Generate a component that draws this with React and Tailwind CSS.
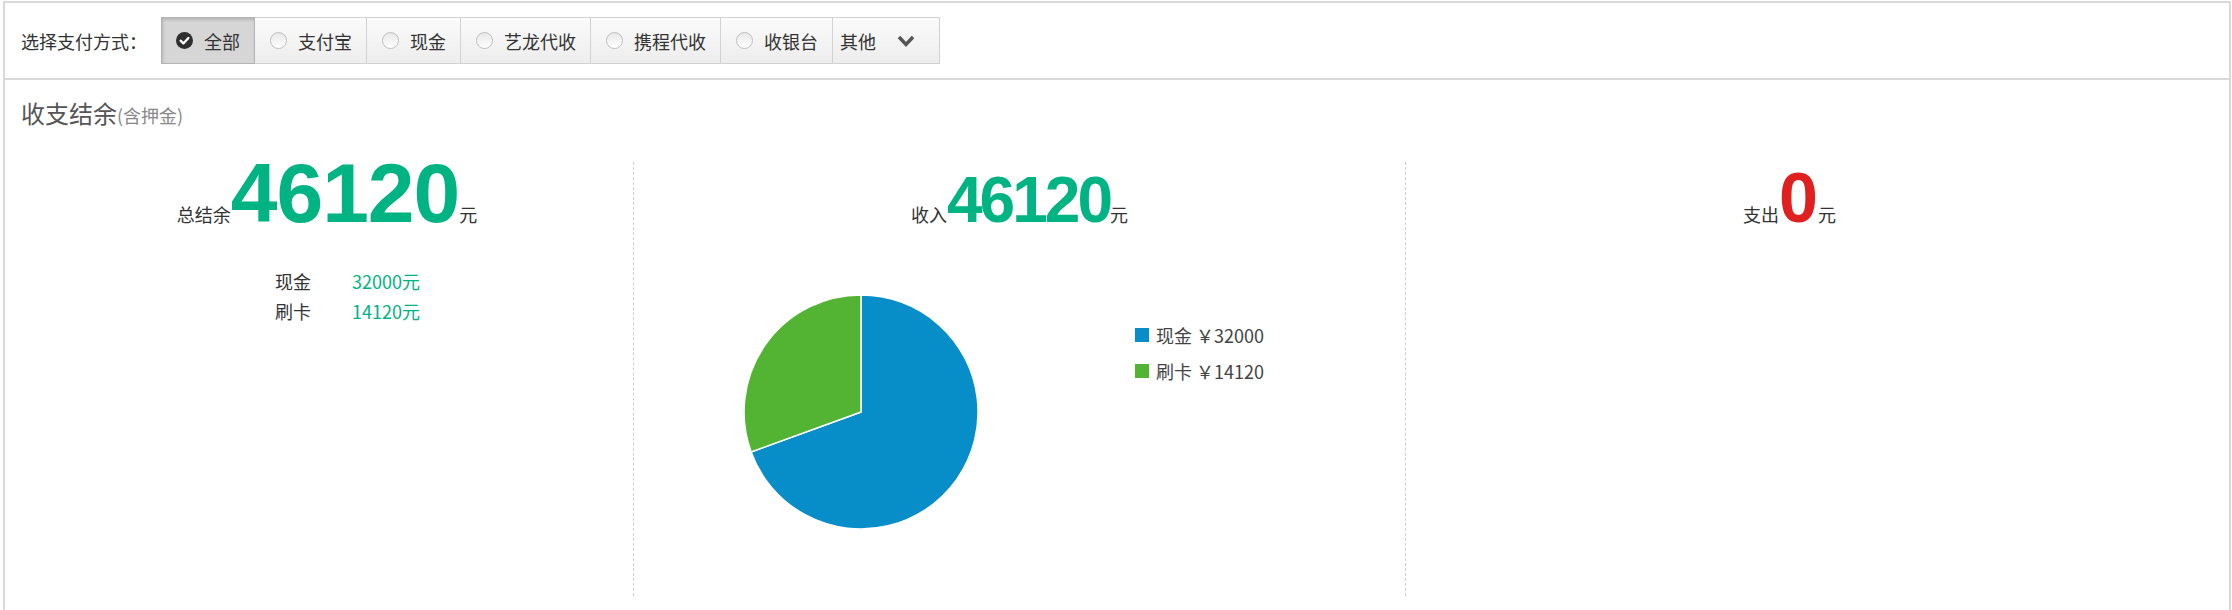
import React from 'react';

// --- Payment method filter ---
const methods = [
  { label: '全部', active: true },
  { label: '支付宝' },
  { label: '现金' },
  { label: '艺龙代收' },
  { label: '携程代收' },
  { label: '收银台' },
];

const CheckedIcon = () => (
  <svg width="17" height="17" viewBox="0 0 17 17">
    <circle cx="8.5" cy="8.5" r="8.5" fill="#2e2e2e" />
    <path d="M4.6 8.7 L7.4 11.4 L12.4 5.9" fill="none" stroke="#fff" strokeWidth="2.3" strokeLinecap="round" strokeLinejoin="round" />
  </svg>
);

const Radio = () => (
  <span className="block w-[17px] h-[17px] rounded-full border border-[#bfbfbf] bg-gradient-to-b from-[#e8e8e8] to-white" />
);

const MethodButton = ({ label, active }) => (
  <button
    className={
      active
        ? 'relative z-10 -ml-px flex items-center gap-[11px] h-[47px] px-[14px] border border-[#b4b4b4] bg-[#d6d6d6] shadow-[inset_1px_2px_3px_rgba(0,0,0,0.15)] text-[18px] leading-none text-[#333]'
        : '-ml-px flex items-center gap-[11px] h-[47px] pl-[15px] pr-[14px] border border-[#d2d2d2] bg-gradient-to-b from-[#fbfbfb] to-[#ededed] text-[18px] leading-none text-[#333]'
    }
  >
    {active ? <CheckedIcon /> : <Radio />}
    <span>{label}</span>
  </button>
);

// --- Pie chart (32000 / 14120) ---
const PieChart = () => (
  <svg width="240" height="240" viewBox="0 0 240 240">
    <path d="M120 120 L120 3 A117 117 0 1 1 10.1 160 Z" fill="#078ec8" stroke="#fff" strokeWidth="1.5" strokeLinejoin="round" />
    <path d="M120 120 L10.1 160 A117 117 0 0 1 120 3 Z" fill="#53b332" stroke="#fff" strokeWidth="1.5" strokeLinejoin="round" />
  </svg>
);

const legend = [
  { name: '现金', value: '￥32000', color: 'bg-[#078ec8]' },
  { name: '刷卡', value: '￥14120', color: 'bg-[#53b332]' },
];

export default function App() {
  return (
    <div className="min-h-[610px] bg-white pl-[3px] pr-[1px] pt-[1px] font-['Noto_Sans_CJK_SC',sans-serif] text-[#333]">
      <div className="border-2 border-[#d9d9d9] min-h-[660px]">
        {/* --- Filter bar --- */}
        <div className="h-[77px] flex items-center pl-[16px] border-b-2 border-[#d9d9d9]">
          <span className="text-[18px] leading-[24px] mr-[14px]">选择支付方式：</span>
          <div className="flex items-center pl-px">
            {methods.map((m) => (
              <MethodButton key={m.label} {...m} />
            ))}
            <button className="-ml-px flex items-center h-[47px] pl-[7px] pr-[24px] gap-[21px] border border-[#d2d2d2] bg-gradient-to-b from-[#fbfbfb] to-[#ededed] text-[18px] leading-none text-[#333]">
              <span>其他</span>
              <svg width="18" height="12" viewBox="0 0 18 12">
                <polyline points="2,2 9,9.5 16,2" fill="none" stroke="#555" strokeWidth="3.4" />
              </svg>
            </button>
          </div>
        </div>

        {/* --- Balance section --- */}
        <div className="pl-[16px] pt-[17px] leading-[32px]">
          <span className="text-[24px] text-[#555]">收支结余</span>
          <span className="text-[18px] text-[#888]">(含押金)</span>
        </div>

        <div className="mt-[30px] grid grid-cols-[628px_772px_1fr] h-[434px]">
          {/* total */}
          <div>
            <div className="-mt-[11px] pl-[16px] flex justify-center items-baseline">
              <span className="text-[18px] leading-none">总结余</span>
              <span className="font-['Liberation_Sans',Arial,sans-serif] font-bold text-[84px] leading-none tracking-[-1px] text-[#00b383]">46120</span>
              <span className="text-[18px] leading-none">元</span>
            </div>
            <div className="mt-[31px] pl-[270px] grid grid-cols-[77px_auto] text-[18px] leading-[30px]">
              <span>现金</span>
              <span className="text-[#00b383]">32000元</span>
              <span>刷卡</span>
              <span className="text-[#00b383]">14120元</span>
            </div>
          </div>

          {/* income */}
          <div className="border-l border-dashed border-[#cfcfcf]">
            <div className="mt-[6px] flex justify-center items-baseline">
              <span className="text-[18px] leading-none">收入</span>
              <span className="font-['Liberation_Sans',Arial,sans-serif] font-bold text-[64px] leading-none tracking-[-3px] text-[#00b383]">46120</span>
              <span className="text-[18px] leading-none">元</span>
            </div>
            <div className="mt-[60px] flex items-start">
              <div className="ml-[107px]">
                <PieChart />
              </div>
              <div className="ml-[154px] mt-[31px] flex flex-col gap-[12px]">
                {legend.map((l) => (
                  <div key={l.name} className="flex items-center gap-[7px] text-[18px] leading-[24px] text-[#444]">
                    <span className={`block w-[14px] h-[14px] ${l.color}`} />
                    <span>{l.name} {l.value}</span>
                  </div>
                ))}
              </div>
            </div>
          </div>

          {/* expense */}
          <div className="border-l border-dashed border-[#cfcfcf]">
            <div className="mt-[1px] pr-[56px] flex justify-center items-baseline">
              <span className="text-[18px] leading-none">支出</span>
              <span className="font-['Liberation_Sans',Arial,sans-serif] font-bold text-[70px] leading-none text-[#e02020]">0</span>
              <span className="text-[18px] leading-none">元</span>
            </div>
          </div>
        </div>
      </div>
    </div>
  );
}
